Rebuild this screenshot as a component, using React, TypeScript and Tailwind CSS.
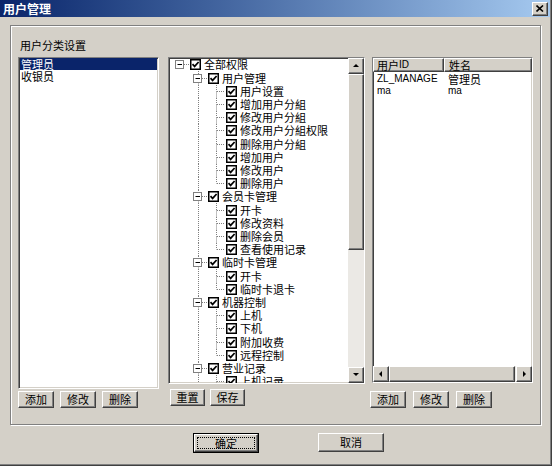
import type { ReactNode } from "react";

type Node = { label: string; children?: Node[] };

type Row = {
  label: string;
  level: number;
  guides: boolean[];
  hasKids: boolean;
  first: boolean;
  last: boolean;
};

const tree: Node = {
  label: "全部权限",
  children: [
    {
      label: "用户管理",
      children: [
        { label: "用户设置" },
        { label: "增加用户分組" },
        { label: "修改用户分組" },
        { label: "修改用户分組权限" },
        { label: "删除用户分組" },
        { label: "增加用户" },
        { label: "修改用户" },
        { label: "删除用户" },
      ],
    },
    {
      label: "会员卡管理",
      children: [
        { label: "开卡" },
        { label: "修改资料" },
        { label: "删除会员" },
        { label: "查看使用记录" },
      ],
    },
    {
      label: "临时卡管理",
      children: [{ label: "开卡" }, { label: "临时卡退卡" }],
    },
    {
      label: "机器控制",
      children: [
        { label: "上机" },
        { label: "下机" },
        { label: "附加收费" },
        { label: "远程控制" },
      ],
    },
    {
      label: "营业记录",
      children: [{ label: "上机记录" }, { label: "收费记录" }, { label: "交班记录" }],
    },
    { label: "系统设置" },
  ],
};

function flatten(node: Node, level: number, guides: boolean[], last: boolean, out: Row[]) {
  out.push({
    label: node.label,
    level,
    guides,
    hasKids: !!node.children?.length,
    first: out.length === 0,
    last,
  });
  const kids = node.children ?? [];
  kids.forEach((c, i) => flatten(c, level + 1, [...guides, !last], i === kids.length - 1, out));
}

const rows: Row[] = [];
flatten(tree, 0, [], true, rows);

const raised =
  "border border-t-white border-l-white border-r-[#404040] border-b-[#404040] shadow-[inset_-1px_-1px_0_#808080]";
const sunken =
  "border border-t-[#808080] border-l-[#808080] border-r-white border-b-white shadow-[inset_1px_1px_0_#404040,inset_-1px_-1px_0_#d4d0c8]";

function Btn({ children, className = "" }: { children: ReactNode; className?: string }) {
  return (
    <button
      type="button"
      className={`flex items-center justify-center bg-[#d4d0c8] text-[11px] leading-[13px] text-black ${raised} ${className}`}
    >
      {children}
    </button>
  );
}

function Arrow({ dir }: { dir: "up" | "down" | "left" | "right" }) {
  const pts = {
    up: "4,2 1,5 7,5",
    down: "1,2 7,2 4,5",
    left: "5,1 5,7 2,4",
    right: "3,1 3,7 6,4",
  }[dir];
  return (
    <div className={`flex h-[16px] w-[16px] shrink-0 items-center justify-center bg-[#d4d0c8] ${raised}`}>
      <svg width="8" height="8" viewBox="0 0 8 8">
        <polygon points={pts} fill="#000" />
      </svg>
    </div>
  );
}

function Guide({ h, line }: { h: number; line: boolean }) {
  return (
    <svg width="18" height={h} className="shrink-0">
      {line && <line x1="9.5" y1="0" x2="9.5" y2={h} stroke="#808080" strokeDasharray="1 1" />}
    </svg>
  );
}

function Connector({ h, row }: { h: number; row: Row }) {
  const cy = Math.floor(h / 2) + 0.5;
  return (
    <svg width="18" height={h} className="shrink-0">
      {!row.first && <line x1="9.5" y1="0" x2="9.5" y2={cy} stroke="#808080" strokeDasharray="1 1" />}
      {!row.last && <line x1="9.5" y1={cy} x2="9.5" y2={h} stroke="#808080" strokeDasharray="1 1" />}
      <line x1={row.hasKids ? 13 : 10} y1={cy} x2="18" y2={cy} stroke="#808080" strokeDasharray="1 1" />
      {row.hasKids && (
        <>
          <rect x="4.5" y={cy - 4} width="8" height="8" fill="#fff" stroke="#808080" />
          <line x1="6.5" y1={cy} x2="11" y2={cy} stroke="#000" />
        </>
      )}
    </svg>
  );
}

function Check() {
  return (
    <span className="flex h-[11px] w-[11px] shrink-0 items-center justify-center border border-black bg-white shadow-[inset_0_0_0_0.5px_#000]">
      <svg width="9" height="9" viewBox="0 0 9 9">
        <polyline points="1.5,4.2 3.6,6.4 7.6,2" fill="none" stroke="#000" strokeWidth="1.7" />
      </svg>
    </span>
  );
}

function Tree() {
  return (
    <div className={`flex h-[327px] w-[197px] bg-white ${sunken}`}>
      <div className="flex-1 overflow-hidden pl-[2px]">
        {rows.map((r, i) => {
          const h = i % 5 === 1 ? 14 : 13;
          return (
            <div key={i} className={`flex items-center ${h === 14 ? "h-[14px]" : "h-[13px]"}`}>
              {r.guides.map((g, j) => (
                <Guide key={j} h={h} line={g} />
              ))}
              <Connector h={h} row={r} />
              <span className="ml-[1px]">
                <Check />
              </span>
              <span className="ml-[3px] whitespace-nowrap text-[11px] leading-[13px] text-black">{r.label}</span>
            </div>
          );
        })}
      </div>
      <div className="flex w-[16px] shrink-0 flex-col">
        <Arrow dir="up" />
        <div className={`h-[176px] bg-[#d4d0c8] ${raised}`} />
        <div className="flex-1 bg-[#ebe9e5]" />
        <Arrow dir="down" />
      </div>
    </div>
  );
}

function UserList() {
  return (
    <div className={`flex h-[326px] w-[161px] flex-col bg-white ${sunken}`}>
      <div className="flex h-[14px] shrink-0">
        <div className={`flex w-[71px] items-center bg-[#d4d0c8] pl-[3px] text-[11px] leading-[12px] ${raised}`}>
          用户<span className="font-['Liberation_Sans',sans-serif] text-[10px]">ID</span>
        </div>
        <div className={`flex flex-1 items-center bg-[#d4d0c8] pl-[4px] text-[11px] leading-[12px] ${raised}`}>
          姓名
        </div>
      </div>
      <div className="mt-[1px] flex-1">
        {[
          ["ZL_MANAGE", "管理员"],
          ["ma", "ma"],
        ].map(([id, name]) => (
          <div key={id} className="flex h-[12px] items-center text-[11px] leading-[12px]">
            <span className="w-[71px] pl-[4px] font-['Liberation_Sans',sans-serif] text-[10px]">{id}</span>
            <span className={`pl-[4px] ${name === "ma" ? "font-['Liberation_Sans',sans-serif] text-[10px]" : ""}`}>
              {name}
            </span>
          </div>
        ))}
      </div>
      <div className="flex h-[16px] shrink-0">
        <Arrow dir="left" />
        <div className="flex flex-1 bg-[#ebe9e5] pr-[1px]">
          <div className={`flex-1 bg-[#d4d0c8] ${raised}`} />
        </div>
        <Arrow dir="right" />
      </div>
    </div>
  );
}

export default function App() {
  return (
    <div className="flex h-[466px] w-[552px] flex-col border-r border-b border-[#404040] bg-[#d4d0c8] pr-[1px] font-['Noto_Sans_CJK_SC',sans-serif] text-black shadow-[inset_-1px_-1px_0_#808080]">
      {/* title bar */}
      <div className="flex h-[17px] shrink-0 items-center bg-gradient-to-r from-[#0a246a] to-[#a6caf0] pl-[3px] pr-[2px]">
        <span className="text-[12px] font-bold leading-[14px] text-white">用户管理</span>
        <div className={`ml-auto flex h-[14px] w-[16px] items-center justify-center bg-[#d4d0c8] ${raised}`}>
          <svg width="8" height="7" viewBox="0 0 8 7">
            <path d="M0.5 0.5 L7 6.5 M7 0.5 L0.5 6.5" stroke="#000" strokeWidth="1.6" />
          </svg>
        </div>
      </div>

      {/* group box */}
      <div className="ml-[10px] mt-[8px] h-[400px] w-[531px] border border-[#808080] pl-[7px] pt-[13px] shadow-[inset_1px_1px_0_#fff,1px_1px_0_#fff]">
        <div className="ml-[2px] h-[12px] text-[11px] leading-[12px]">用户分类设置</div>
        <div className="mt-[6px] flex">
          {/* categories */}
          <div className="flex w-[141px] flex-col">
            <div className={`h-[332px] bg-white ${sunken} p-[1px] pt-0`}>
              <div className="flex h-[12px] items-center bg-[#0a246a] pl-[1px] text-[11px] leading-[12px] text-white">
                管理员
              </div>
              <div className="flex h-[12px] items-center pl-[1px] text-[11px] leading-[12px]">收银员</div>
            </div>
            <div className="mt-[2px] flex gap-[6px]">
              <Btn className="h-[17px] w-[36px]">添加</Btn>
              <Btn className="h-[17px] w-[36px]">修改</Btn>
              <Btn className="h-[17px] w-[36px]">删除</Btn>
            </div>
          </div>

          {/* permissions */}
          <div className="ml-[9px] flex flex-col">
            <Tree />
            <div className="mt-[5px] flex gap-[5px] pl-[2px]">
              <Btn className="h-[17px] w-[35px]">重置</Btn>
              <Btn className="h-[17px] w-[35px]">保存</Btn>
            </div>
          </div>

          {/* users */}
          <div className="ml-[7px] flex flex-col">
            <UserList />
            <div className="-ml-[2px] mt-[8px] flex gap-[7px]">
              <Btn className="h-[17px] w-[36px]">添加</Btn>
              <Btn className="h-[17px] w-[36px]">修改</Btn>
              <Btn className="h-[17px] w-[36px]">删除</Btn>
            </div>
          </div>
        </div>
      </div>

      {/* dialog buttons */}
      <div className="ml-[193px] mt-[8px] flex">
        <div className="h-[20px] w-[66px] border border-black">
          <div className={`flex h-full w-full bg-[#d4d0c8] p-[2px] ${raised}`}>
            <span className="flex flex-1 items-center justify-center border border-dotted border-black text-[11px] leading-[12px]">
              确定
            </span>
          </div>
        </div>
        <Btn className="ml-[59px] h-[19px] w-[66px]">取消</Btn>
      </div>
    </div>
  );
}
